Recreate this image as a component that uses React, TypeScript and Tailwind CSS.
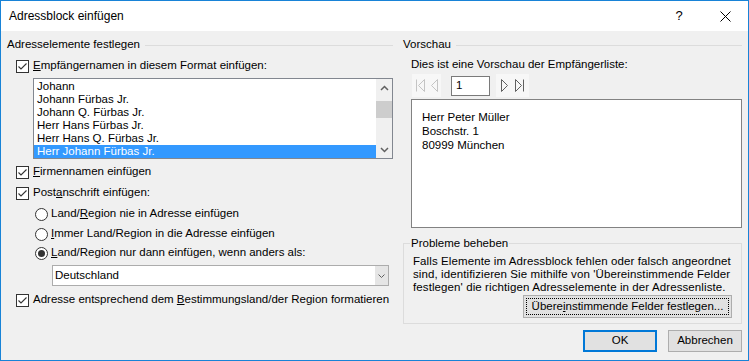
import React from "react"

const names = [
  "Johann",
  "Johann Fürbas Jr.",
  "Johann Q. Fürbas Jr.",
  "Herr Hans Fürbas Jr.",
  "Herr Hans Q. Fürbas Jr.",
  "Herr Johann Fürbas Jr.",
]

function CheckBox() {
  return (
    <svg width="13" height="13" viewBox="0 0 13 13" className="shrink-0">
      <rect x="0.5" y="0.5" width="12" height="12" fill="#fff" stroke="#333" />
      <path d="M2.5 6.5l2.5 2.5 5.5-5.5" fill="none" stroke="#333" strokeWidth="1.1" />
    </svg>
  )
}

function Radio({ selected = false }: { selected?: boolean }) {
  return (
    <svg width="13" height="13" viewBox="0 0 13 13" className="shrink-0">
      <circle cx="6.5" cy="6.5" r="6" fill="#fff" stroke="#333" />
      {selected && <circle cx="6.5" cy="6.5" r="3.5" fill="#333" />}
    </svg>
  )
}

function Chevron({ dir }: { dir: "up" | "down" }) {
  return (
    <svg width="9" height="6" viewBox="0 0 9 6">
      <path
        d={dir === "up" ? "M1 5l3.5-3.5L8 5" : "M1 1l3.5 3.5L8 1"}
        fill="none"
        stroke="#606060"
        strokeWidth="1.5"
      />
    </svg>
  )
}

function NavIcon({ kind, color }: { kind: "first" | "prev" | "next" | "last"; color: string }) {
  return (
    <svg width="10" height="13" viewBox="0 0 10 13">
      {kind === "first" && (
        <>
          <path d="M1.5 0.5v12" stroke={color} />
          <path d="M9.5 0.5L3.5 6.5l6 6z" fill="none" stroke={color} />
        </>
      )}
      {kind === "prev" && <path d="M8.5 0.5L2.5 6.5l6 6z" fill="none" stroke={color} />}
      {kind === "next" && <path d="M1.5 0.5l6 6-6 6z" fill="none" stroke={color} />}
      {kind === "last" && (
        <>
          <path d="M0.5 0.5l6 6-6 6z" fill="none" stroke={color} />
          <path d="M8.5 0.5v12" stroke={color} />
        </>
      )}
    </svg>
  )
}

export default function App() {
  return (
    <div className="w-[749px] h-[361px] border border-[#1883d7] bg-[#f0f0f0] flex flex-col text-[11.5px] text-black font-['Liberation_Sans',Arial,sans-serif] overflow-hidden">
      {/* Title bar */}
      <div className="h-[30px] bg-white flex items-center shrink-0">
        <span className="pl-[8px] text-[12px]">Adressblock einfügen</span>
        <div className="ml-auto flex h-full">
          <div className="w-[46px] flex items-center justify-center text-[13px]">?</div>
          <div className="w-[46px] flex items-center justify-center">
            <svg width="11" height="11" viewBox="0 0 11 11">
              <path d="M0.5 0.5l10 10M10.5 0.5l-10 10" stroke="#000" strokeWidth="1" />
            </svg>
          </div>
        </div>
      </div>

      <div className="flex flex-1">
        {/* Left column */}
        <div className="w-[392px] pl-[6px] flex flex-col">
          <div className="mt-[7px] h-[14px] flex items-center">
            <span>Adresselemente festlegen</span>
            <div className="flex-1 h-px bg-[#dcdcdc] ml-[5px]" />
          </div>

          <div className="mt-[7px] h-[14px] flex items-center pl-[9px] gap-[4px]">
            <CheckBox />
            <span>
              <u>E</u>mpfängernamen in diesem Format einfügen:
            </span>
          </div>

          <div className="mt-[5px] ml-[26px] w-[360px] h-[81px] border border-[#828790] bg-white flex">
            <div className="flex-1 flex flex-col pt-px">
              {names.map((n, i) => (
                <div
                  key={n}
                  className={
                    i === 5
                      ? "h-[13px] leading-[13px] pl-[3px] bg-[#3399ff] text-white"
                      : "h-[13px] leading-[13px] pl-[3px]"
                  }
                >
                  {n}
                </div>
              ))}
            </div>
            <div className="w-[16px] flex flex-col bg-[#f0f0f0]">
              <div className="h-[17px] flex items-center justify-center">
                <Chevron dir="up" />
              </div>
              <div className="mt-[5px] h-[17px] bg-[#cdcdcd]" />
              <div className="flex-1" />
              <div className="h-[17px] flex items-center justify-center">
                <Chevron dir="down" />
              </div>
            </div>
          </div>

          <div className="mt-[6px] h-[14px] flex items-center pl-[9px] gap-[4px]">
            <CheckBox />
            <span>
              <u>F</u>irmennamen einfügen
            </span>
          </div>

          <div className="mt-[7px] h-[14px] flex items-center pl-[9px] gap-[4px]">
            <CheckBox />
            <span>
              Post<u>a</u>nschrift einfügen:
            </span>
          </div>

          <div className="mt-[7px] h-[14px] flex items-center pl-[28px] gap-[3px]">
            <Radio />
            <span>
              Land/<u>R</u>egion nie in Adresse einfügen
            </span>
          </div>

          <div className="mt-[6px] h-[14px] flex items-center pl-[28px] gap-[3px]">
            <Radio />
            <span>
              <u>I</u>mmer Land/Region in die Adresse einfügen
            </span>
          </div>

          <div className="mt-[5px] h-[14px] flex items-center pl-[28px] gap-[3px]">
            <Radio selected />
            <span>
              <u>L</u>and/Region nur dann einfügen, wenn anders als:
            </span>
          </div>

          <div className="mt-[5px] ml-[45px] w-[337px] h-[21px] border border-[#acacac] bg-white flex">
            <div className="flex-1 flex items-center pl-[2px]">Deutschland</div>
            <div className="w-[13px] bg-[#e5e5e5] flex items-center justify-center">
              <svg width="7" height="4" viewBox="0 0 7 4">
                <path d="M0.5 0.5l3 3 3-3" fill="none" stroke="#606060" />
              </svg>
            </div>
          </div>

          <div className="mt-[7px] h-[14px] flex items-center pl-[9px] gap-[4px]">
            <CheckBox />
            <span>
              Adresse entsprechend dem <u>B</u>estimmungsland/der Region formatieren
            </span>
          </div>
        </div>

        {/* Right column */}
        <div className="ml-[10px] w-[339px] flex flex-col">
          <div className="mt-[7px] h-[14px] flex items-center">
            <span>Vorschau</span>
            <div className="flex-1 h-px bg-[#dcdcdc] ml-[5px]" />
          </div>

          <div className="mt-[6px] h-[14px] flex items-center pl-[8px]">
            Dies ist eine Vorschau der Empfängerliste:
          </div>

          <div className="mt-[2px] h-[23px] flex items-center pl-[9px]">
            <div className="w-[29px] h-[23px] bg-[#f7f7f7] flex items-center justify-center gap-[4px]">
              <NavIcon kind="first" color="#c4c4c4" />
              <NavIcon kind="prev" color="#c4c4c4" />
            </div>
            <div className="ml-[10px] w-[39px] h-[20px] border border-[#7a7a7a] bg-white flex items-center pl-[4px]">
              1
            </div>
            <div className="ml-[6px] w-[33px] h-[23px] bg-[#f7f7f7] flex items-center justify-center gap-[5px]">
              <NavIcon kind="next" color="#606060" />
              <NavIcon kind="last" color="#606060" />
            </div>
          </div>

          <div className="mt-[2px] ml-[8px] w-[331px] h-[129px] border border-[#828282] bg-white pl-[10px] pt-[10px] leading-[14px]">
            <div>Herr Peter Müller</div>
            <div>Boschstr. 1</div>
            <div>80999 München</div>
          </div>

          <fieldset className="mt-[8px] w-[339px] min-w-0 border border-[#dcdcdc] pl-[9px] pr-[9px] pt-[5px] pb-[5px]">
            <legend className="-ml-[3px] px-px leading-[14px]">Probleme beheben</legend>
            <p className="leading-[13px] whitespace-nowrap tracking-[0.1px]">
              Falls Elemente im Adressblock fehlen oder falsch angeordnet
              <br />
              sind, identifizieren Sie mithilfe von 'Übereinstimmende Felder
              <br />
              festlegen' die richtigen Adresselemente in der Adressenliste.
            </p>
            <div className="mt-px flex justify-end">
              <button className="w-[209px] h-[23px] border border-[#adadad] bg-[#e1e1e1] p-[2px]">
                <span className="w-full h-full border border-dotted border-black flex items-center justify-center">
                  Übere<u>i</u>nstimmende Felder festlegen...
                </span>
              </button>
            </div>
          </fieldset>

          <div className="mt-[6px] flex justify-end gap-[11px]">
            <button className="w-[74px] h-[22px] border-2 border-[#0078d7] bg-[#e1e1e1]">OK</button>
            <button className="w-[74px] h-[22px] border border-[#adadad] bg-[#e1e1e1]">Abbrechen</button>
          </div>
        </div>
      </div>
    </div>
  )
}
